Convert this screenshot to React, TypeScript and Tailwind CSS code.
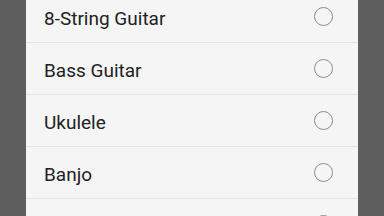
import React from 'react';

const OPTIONS = ['8-String Guitar', 'Bass Guitar', 'Ukulele', 'Banjo', ''];

function Radio(): React.ReactElement {
  return <span className="block w-[19px] h-[19px] rounded-full border-[1.5px] border-[#8c8c8c]" />;
}

export default function App(): React.ReactElement {
  return (
    <div className="w-[384px] h-[216px] overflow-hidden bg-[#5e5e5e] flex" style={{ fontFamily: 'Roboto, "Noto Sans", sans-serif' }}>
      <div className="w-[332px] ml-[26px] bg-[#f5f5f5] flex flex-col -mt-[9px]">
        {OPTIONS.map((name, i) => (
          <div key={i} className="h-[52px] shrink-0 flex items-center justify-between pl-[18px] pr-[25px] border-b border-[#e4e4e4]">
            <span className="text-[19px] leading-none pt-[3px] text-[#222222]">{name}</span>
            <Radio />
          </div>
        ))}
      </div>
    </div>
  );
}
